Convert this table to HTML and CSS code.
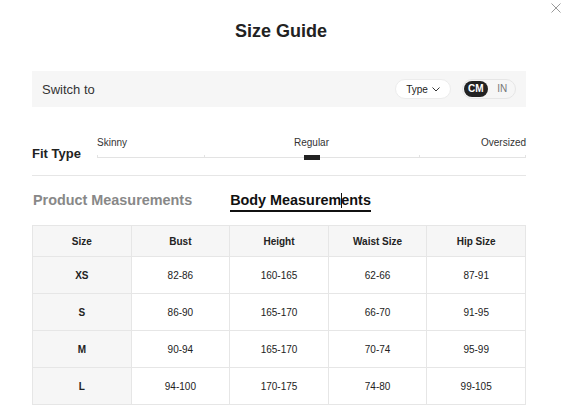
FILE: index.html
```html
<!DOCTYPE html>
<html>
<head>
<meta charset="utf-8">
<link rel="stylesheet" href="styles.css">
</head>
<body>
<div class="modal">
  <button class="close" aria-label="Close">
    <svg width="10" height="10" viewBox="0 0 10 10"><path d="M0.5 0.5L9.5 9.5M9.5 0.5L0.5 9.5" stroke="#9a9a9a" stroke-width="1" fill="none"/></svg>
  </button>
  <h1 class="title">Size Guide</h1>

  <div class="switch-bar">
    <span class="switch-label">Switch to</span>
    <div class="switch-controls">
      <div class="type-pill">Type
        <svg class="chev" width="8" height="5" viewBox="0 0 8 5"><path d="M0.5 0.5L4 4L7.5 0.5" stroke="#333" stroke-width="1" fill="none"/></svg>
      </div>
      <div class="unit-toggle">
        <span class="unit active">CM</span>
        <span class="unit">IN</span>
      </div>
    </div>
  </div>

  <div class="fit">
    <div class="fit-label">Fit Type</div>
    <div class="slider">
      <div class="slider-labels">
        <span class="sl-left">Skinny</span>
        <span class="sl-mid">Regular</span>
        <span class="sl-right">Oversized</span>
      </div>
      <div class="track">
        <span class="tick t0"></span>
        <span class="tick t25"></span>
        <span class="tick t75"></span>
        <span class="tick t100"></span>
        <span class="thumb"></span>
      </div>
    </div>
  </div>

  <div class="tabs">
    <span class="tab">Product Measurements</span>
    <span class="tab active">Body Measurem<span class="caret"></span>ents</span>
  </div>

  <table class="sizes">
    <thead>
      <tr><th>Size</th><th>Bust</th><th>Height</th><th>Waist Size</th><th>Hip Size</th></tr>
    </thead>
    <tbody>
      <tr><th>XS</th><td>82-86</td><td>160-165</td><td>62-66</td><td>87-91</td></tr>
      <tr><th>S</th><td>86-90</td><td>165-170</td><td>66-70</td><td>91-95</td></tr>
      <tr><th>M</th><td>90-94</td><td>165-170</td><td>70-74</td><td>95-99</td></tr>
      <tr><th>L</th><td>94-100</td><td>170-175</td><td>74-80</td><td>99-105</td></tr>
    </tbody>
  </table>
</div>
</body>
</html>
```

FILE: styles.css
```css
html, body {
  margin: 0;
  padding: 0;
  background: #fff;
}
body {
  font-family: "Liberation Sans", Arial, sans-serif;
  color: #222;
  width: 562px;
  height: 418px;
  overflow: hidden;
}
.modal {
  position: relative;
  padding: 20px 36px 0 32px;
}
.close {
  position: absolute;
  top: 3px;
  right: 1px;
  border: 0;
  padding: 0;
  background: none;
  width: 10px;
  height: 10px;
  line-height: 0;
}
.title {
  margin: 0;
  text-align: center;
  font-size: 18px;
  line-height: 22px;
  font-weight: bold;
  color: #222;
  padding-left: 4px;
}
.switch-bar {
  margin-top: 29px;
  height: 36px;
  background: #f6f6f6;
  display: flex;
  align-items: center;
  justify-content: space-between;
  padding: 0 10px;
}
.switch-label {
  font-size: 13px;
  color: #333;
}
.switch-controls {
  display: flex;
  align-items: center;
  gap: 11px;
}
.type-pill {
  box-sizing: border-box;
  width: 56px;
  height: 20px;
  border-radius: 10px;
  background: #fff;
  border: 1px solid #ececec;
  font-size: 10px;
  color: #222;
  display: flex;
  align-items: center;
  justify-content: center;
  gap: 4px;
}
.chev { display: block; margin-top: 1px; }
.unit-toggle {
  box-sizing: border-box;
  width: 54px;
  height: 20px;
  border-radius: 10px;
  border: 1px solid #e6e6e6;
  display: flex;
  align-items: center;
  padding: 0 1px;
}
.unit {
  font-size: 10px;
  color: #777;
  width: 24px;
  text-align: center;
  line-height: 16px;
}
.unit + .unit { margin-left: 3px; }
.unit.active {
  background: #222;
  color: #fff;
  font-weight: bold;
  border-radius: 8px;
}
.fit {
  margin-top: 29px;
  display: flex;
  border-bottom: 1px solid #e6e6e6;
  padding-bottom: 13px;
}
.fit-label {
  width: 65px;
  flex: none;
  font-size: 13px;
  font-weight: bold;
  line-height: 16px;
  margin-top: 10px;
  color: #222;
}
.slider {
  flex: 1;
}
.slider-labels {
  display: grid;
  grid-template-columns: 1fr auto 1fr;
  font-size: 10px;
  line-height: 14px;
  color: #333;
}
.sl-left { justify-self: start; }
.sl-mid { justify-self: center; }
.sl-right { justify-self: end; }
.track {
  position: relative;
  height: 12px;
}
.track::before {
  content: "";
  position: absolute;
  left: 0;
  right: 0;
  top: 7px;
  height: 1px;
  background: #e3e3e3;
}
.tick {
  position: absolute;
  top: 5px;
  width: 1px;
  height: 3px;
  background: #e3e3e3;
}
.t0 { left: 0; }
.t25 { left: 25%; }
.t75 { left: 75%; }
.t100 { right: 0; }
.thumb {
  position: absolute;
  left: calc(50% - 8px);
  top: 5px;
  width: 16px;
  height: 5px;
  background: #222;
}
.tabs {
  display: flex;
  gap: 38px;
  margin-top: 15px;
  padding-left: 1px;
}
.tab {
  font-size: 14.4px;
  font-weight: bold;
  color: #888;
  line-height: 19px;
  padding-bottom: 0;
  border-bottom: 2px solid transparent;
}
.tab.active {
  color: #111;
  border-bottom-color: #111;
}
.caret {
  display: inline-block;
  width: 1px;
  height: 15px;
  background: #111;
  margin-right: -1px;
  vertical-align: -3px;
}
.sizes {
  margin-top: 13px;
  width: 494px;
  table-layout: fixed;
  border-collapse: collapse;
  font-size: 10px;
  color: #222;
}
.sizes th, .sizes td {
  border: 1px solid #e6e6e6;
  text-align: center;
  padding: 0;
}
.sizes thead th {
  background: #f6f6f6;
  font-weight: bold;
  height: 30px;
}
.sizes tbody th {
  background: #f6f6f6;
  font-weight: bold;
}
.sizes tbody td, .sizes tbody th {
  height: 36px;
}
```
